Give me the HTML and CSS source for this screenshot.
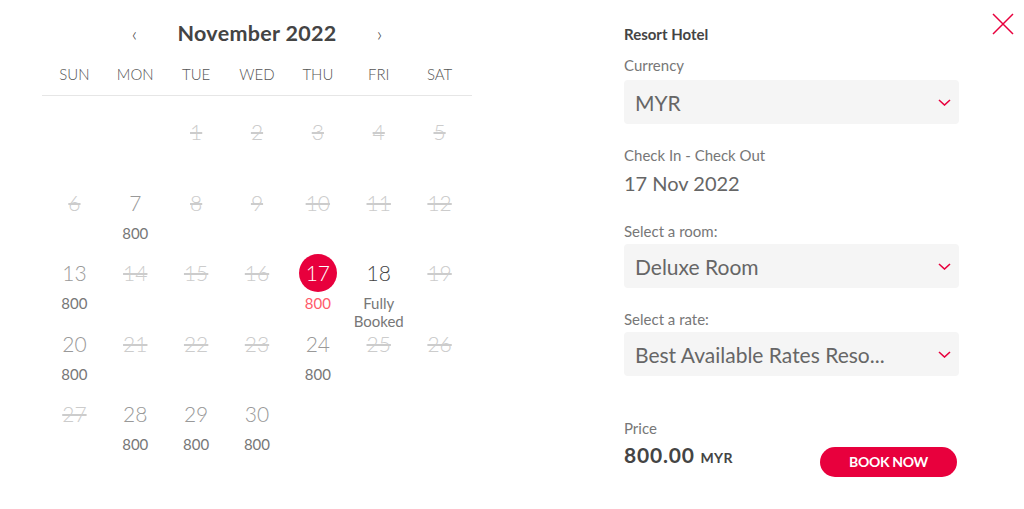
FILE: index.html
```html
<!DOCTYPE html>
<html lang="en">
<head>
    <meta charset="UTF-8">
    <meta name="viewport" content="width=device-width, initial-scale=1.0">
    <title>Booking</title>
    <link rel="stylesheet" href="styles.css">
</head>
<body>
    <div id="booking">
        <div id="calendar">
            <div class="cal-head">
                <span class="nav">&#8249;</span>
                <span class="month">November 2022</span>
                <span class="nav">&#8250;</span>
            </div>
            <div class="weekdays">
                <span>SUN</span><span>MON</span><span>TUE</span><span>WED</span><span>THU</span><span>FRI</span><span>SAT</span>
            </div>
            <div class="days">
                <div class="day"></div>
                <div class="day"></div>
                <div class="day off"><div class="num">1</div></div>
                <div class="day off"><div class="num">2</div></div>
                <div class="day off"><div class="num">3</div></div>
                <div class="day off"><div class="num">4</div></div>
                <div class="day off"><div class="num">5</div></div>

                <div class="day off"><div class="num">6</div></div>
                <div class="day"><div class="num">7</div><div class="price">800</div></div>
                <div class="day off"><div class="num">8</div></div>
                <div class="day off"><div class="num">9</div></div>
                <div class="day off"><div class="num">10</div></div>
                <div class="day off"><div class="num">11</div></div>
                <div class="day off"><div class="num">12</div></div>

                <div class="day"><div class="num">13</div><div class="price">800</div></div>
                <div class="day off"><div class="num">14</div></div>
                <div class="day off"><div class="num">15</div></div>
                <div class="day off"><div class="num">16</div></div>
                <div class="day selected"><div class="num">17</div><div class="price">800</div></div>
                <div class="day booked"><div class="num">18</div><div class="price">Fully Booked</div></div>
                <div class="day off"><div class="num">19</div></div>

                <div class="day"><div class="num">20</div><div class="price">800</div></div>
                <div class="day off"><div class="num">21</div></div>
                <div class="day off"><div class="num">22</div></div>
                <div class="day off"><div class="num">23</div></div>
                <div class="day"><div class="num">24</div><div class="price">800</div></div>
                <div class="day off"><div class="num">25</div></div>
                <div class="day off"><div class="num">26</div></div>

                <div class="day off"><div class="num">27</div></div>
                <div class="day"><div class="num">28</div><div class="price">800</div></div>
                <div class="day"><div class="num">29</div><div class="price">800</div></div>
                <div class="day"><div class="num">30</div><div class="price">800</div></div>
            </div>
        </div>

        <div id="details">
            <div class="hotel">Resort Hotel</div>
            <div class="label first">Currency</div>
            <div class="select">
                <span>MYR</span>
                <svg class="chevron" width="13" height="7" viewBox="0 0 13 7"><path d="M1 1l5.5 5L12 1" fill="none" stroke="#e8003d" stroke-width="1.6"/></svg>
            </div>
            <div class="label">Check In - Check Out</div>
            <div class="dates">17 Nov 2022</div>
            <div class="label room">Select a room:</div>
            <div class="select">
                <span>Deluxe Room</span>
                <svg class="chevron" width="13" height="7" viewBox="0 0 13 7"><path d="M1 1l5.5 5L12 1" fill="none" stroke="#e8003d" stroke-width="1.6"/></svg>
            </div>
            <div class="label">Select a rate:</div>
            <div class="select">
                <span>Best Available Rates Reso...</span>
                <svg class="chevron" width="13" height="7" viewBox="0 0 13 7"><path d="M1 1l5.5 5L12 1" fill="none" stroke="#e8003d" stroke-width="1.6"/></svg>
            </div>
            <div class="label price-label">Price</div>
            <div class="total">
                <div class="amount">800.00 <small>MYR</small></div>
                <button class="book">BOOK NOW</button>
            </div>
        </div>

        <button id="close" aria-label="Close">
            <svg width="22" height="22" viewBox="0 0 22 22"><path d="M1 1l20 20M21 1L1 21" stroke="#e8003d" stroke-width="1.5"/></svg>
        </button>
    </div>
</body>
</html>
```

FILE: styles.css
```css
body {
    margin: 0;
    font-family: Lato, "Open Sans", sans-serif;
    color: #777;
    background: #fff;
}
#booking {
    display: flex;
    align-items: flex-start;
    height: 509px;
    position: relative;
}
#calendar {
    width: 430px;
    margin-left: 42px;
    padding-top: 20px;
}
.cal-head {
    display: flex;
    justify-content: center;
    align-items: center;
    gap: 38px;
    height: 26px;
}
.nav { font-size: 20px; font-weight: 300; color: #444; width: 10px; text-align: center; line-height: 26px; }
.month { font-size: 21.5px; font-weight: 700; color: #444; letter-spacing: 0.3px; }
.weekdays {
    display: grid;
    grid-template-columns: repeat(7, 1fr);
    margin-top: 18px;
    padding: 0 2px 11px;
    border-bottom: 1px solid #e6e6e6;
    line-height: 20px;
    font-size: 15px;
    font-weight: 300;
    color: #555;
    text-align: center;
}
.days {
    display: grid;
    grid-template-columns: repeat(7, 1fr);
    grid-auto-rows: 70.5px;
    padding: 0 2px;
}
.day {
    padding-top: 24px;
    text-align: center;
    height: 66px;
}
.day .num {
    display: inline-block;
    font-size: 21px;
    font-weight: 300;
    line-height: 24px;
    color: #999;
    margin-bottom: 9px;
}
.day .price {
    font-size: 15px;
    line-height: 18px;
    color: #777;
    overflow: hidden;
    height: 33px;
    width: 54px;
    margin: 0 auto;
}
.day.off .num { color: #ccc; text-decoration: line-through; }
.day.booked .num { color: #444; }
.day.selected .num {
    width: 38px;
    height: 38px;
    line-height: 38px;
    border-radius: 50%;
    background: #e8003d;
    color: #fff;
    margin-top: -7px;
    margin-bottom: 2px;
}
.day.selected .price { color: #ff5a6a; }

#details {
    width: 335px;
    margin-left: 152px;
    padding-top: 24px;
}
.hotel { font-size: 15px; font-weight: 700; color: #444; line-height: 20px; }
.label { font-size: 15px; line-height: 20px; color: #777; margin-top: 21px; margin-bottom: 3px; }
.label.first { margin-top: 11px; margin-bottom: 5px; }
.label.room { margin-top: 24px; }
.label.price-label { margin-top: 42px; margin-bottom: 9px; }
.dates { font-size: 20px; line-height: 28px; color: #666; margin-top: 4px; }
.select {
    display: flex;
    justify-content: space-between;
    align-items: center;
    height: 44px;
    padding: 0 8px 0 11px;
    background: #f5f5f5;
    border-radius: 4px;
    font-size: 21px;
    color: #666;
}
.total {
    display: flex;
    justify-content: space-between;
    align-items: flex-start;
    width: 333px;
}
.amount { font-size: 21px; font-weight: 700; color: #444; line-height: 22px; letter-spacing: 0.8px; margin-top: -3px; }
.amount small { font-size: 14px; letter-spacing: 0.3px; }
.book {
    width: 137px;
    height: 30px;
    border: none;
    border-radius: 15px;
    background: #e8003d;
    color: #fff;
    font-family: inherit;
    font-size: 14px;
    font-weight: 700;
    letter-spacing: -0.3px;
    padding-top: 0;
    padding-bottom: 2px;
}
#close {
    position: absolute;
    top: 13px;
    right: 10px;
    padding: 0;
    border: none;
    background: none;
    line-height: 0;
}
```
